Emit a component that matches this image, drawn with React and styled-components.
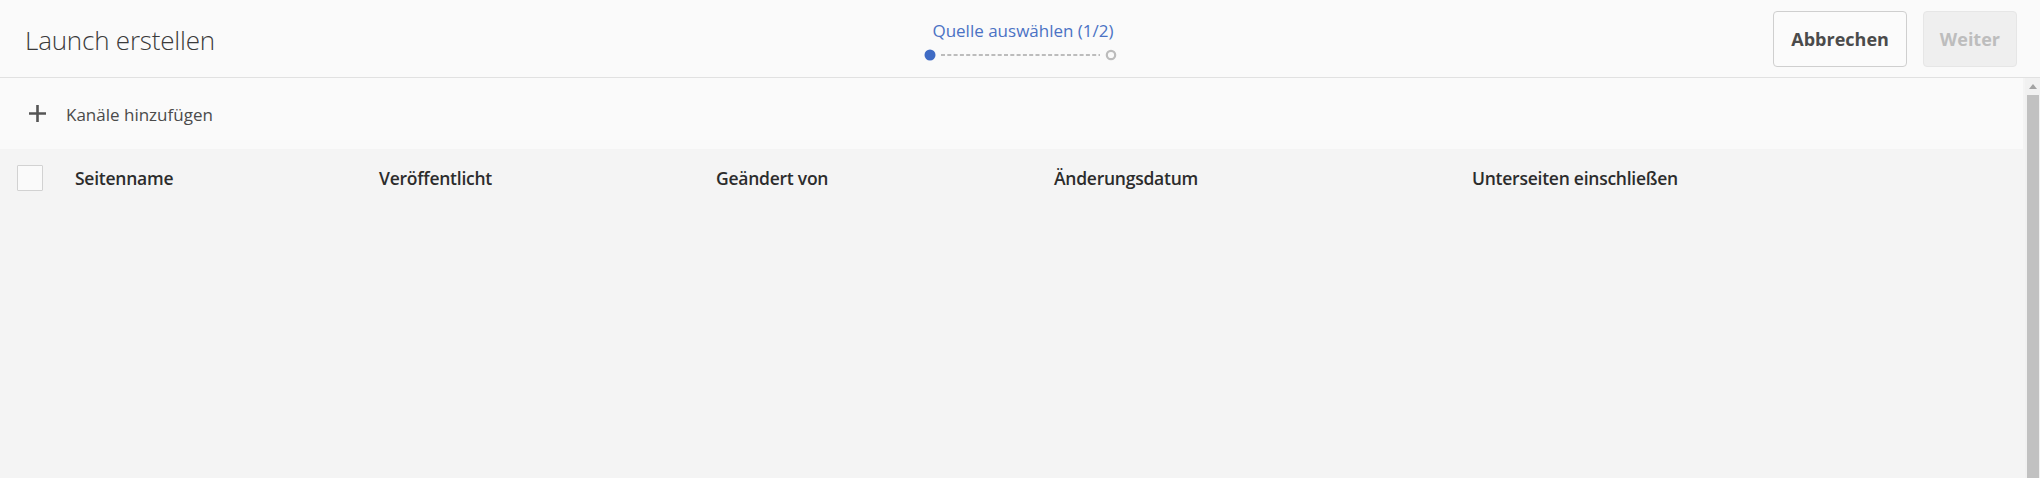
import React from 'react'
import styled, { createGlobalStyle } from 'styled-components'

const Global = createGlobalStyle`
  html, body, #root { height: 100%; }
  body {
    margin: 0;
    font-family: "Open Sans", "Liberation Sans", sans-serif;
    background: #f4f4f4;
    overflow: hidden;
  }
`

const columns = [
  { label: 'Seitenname', width: 304 },
  { label: 'Veröffentlicht', width: 337 },
  { label: 'Geändert von', width: 338 },
  { label: 'Änderungsdatum', width: 418 },
  { label: 'Unterseiten einschließen', width: null },
]

const Page = styled.div`
  height: 100vh;
  display: flex;
  flex-direction: column;
`

const Header = styled.header`
  height: 77px;
  flex: none;
  display: grid;
  grid-template-columns: 1fr auto 1fr;
  align-items: center;
  padding: 0 23px 0 25px;
  background: #fafafa;
  border-bottom: 1px solid #e1e1e1;
`

const Title = styled.h1`
  margin: 3px 0 0;
  font-size: 26px;
  font-weight: 300;
  color: #3a3a3a;
  letter-spacing: -0.2px;
`

const Stepper = styled.div`
  display: flex;
  flex-direction: column;
  align-items: center;
  gap: 6px;
  margin-top: 4px;
`

const StepLabel = styled.div`
  font-size: 17px;
  color: #4b72c4;
  line-height: 22px;
  margin-left: 4px;
`

const Actions = styled.div`
  display: flex;
  justify-content: flex-end;
  gap: 16px;
  margin-top: 1px;
`

const Button = styled.button`
  height: 56px;
  padding: 0 ${p => (p.disabled ? 16 : 17)}px;
  border-radius: 4px;
  font-family: inherit;
  font-size: 18px;
  font-weight: 700;
  border: 1px solid ${p => (p.disabled ? '#e6e6e6' : '#cfcfcf')};
  background: ${p => (p.disabled ? '#efefef' : '#fbfbfb')};
  color: ${p => (p.disabled ? '#bdbdbd' : '#4b4b4b')};
  cursor: ${p => (p.disabled ? 'default' : 'pointer')};
`

const Body = styled.div`
  flex: 1;
  display: flex;
  min-height: 0;
`

const Main = styled.div`
  flex: 1;
  display: flex;
  flex-direction: column;
`

const Toolbar = styled.div`
  height: 71px;
  display: flex;
  align-items: center;
  gap: 19px;
  padding-left: 28px;
  background: #fafafa;
  margin-right: 2px;
`

const AddLabel = styled.span`
  font-size: 17px;
  color: #4b4b4b;
  margin-top: 1px;
`

const TableHead = styled.div`
  display: grid;
  grid-template-columns: 75px ${columns.map(c => (c.width ? `${c.width}px` : '1fr')).join(' ')};
  align-items: center;
  height: 58px;
`

const CheckCell = styled.div`
  padding-left: 17px;
  display: flex;
`

const Checkbox = styled.span`
  width: 24px;
  height: 24px;
  border: 1px solid #d2d2d2;
  background: #fafafa;
  border-radius: 1px;
`

const HeadCell = styled.div`
  font-size: 17.5px;
  font-weight: 600;
  color: #2c2c2c;
  letter-spacing: -0.25px;
  white-space: nowrap;
`

const Scrollbar = styled.div`
  width: 15px;
  flex: none;
  display: flex;
  flex-direction: column;
  background: #f1f1f1;
`

const ScrollArrow = styled.div`
  height: 17px;
  display: flex;
  align-items: center;
  justify-content: center;
`

const Thumb = styled.div`
  flex: 1;
  margin: 0 1px 0 2px;
  background: #c1c1c1;
`

const Plus = () => (
  <svg width="19" height="19" viewBox="0 0 19 19">
    <path d="M9.5 1v17M1 9.5h17" stroke="#555" strokeWidth="2.6" fill="none" />
  </svg>
)

const StepTrack = () => (
  <svg width="194" height="14" viewBox="0 0 194 14">
    <circle cx="6" cy="7" r="5.5" fill="#3f6bc4" />
    <line x1="17" y1="7" x2="176" y2="7" stroke="#bcbcbc" strokeWidth="2.2" strokeDasharray="4 2.3" />
    <circle cx="187" cy="7" r="4.2" fill="none" stroke="#bcbcbc" strokeWidth="2.2" />
  </svg>
)

export default function App() {
  return (
    <Page>
      <Global />
      <Header>
        <Title>Launch erstellen</Title>
        <Stepper>
          <StepLabel>Quelle auswählen (1/2)</StepLabel>
          <StepTrack />
        </Stepper>
        <Actions>
          <Button>Abbrechen</Button>
          <Button disabled>Weiter</Button>
        </Actions>
      </Header>
      <Body>
        <Main>
          <Toolbar>
            <Plus />
            <AddLabel>Kanäle hinzufügen</AddLabel>
          </Toolbar>
          <TableHead>
            <CheckCell>
              <Checkbox />
            </CheckCell>
            {columns.map(c => (
              <HeadCell key={c.label}>{c.label}</HeadCell>
            ))}
          </TableHead>
        </Main>
        <Scrollbar>
          <ScrollArrow>
            <svg width="8" height="5" viewBox="0 0 8 5">
              <path d="M0 5L4 0L8 5Z" fill="#a3a3a3" />
            </svg>
          </ScrollArrow>
          <Thumb />
        </Scrollbar>
      </Body>
    </Page>
  )
}
